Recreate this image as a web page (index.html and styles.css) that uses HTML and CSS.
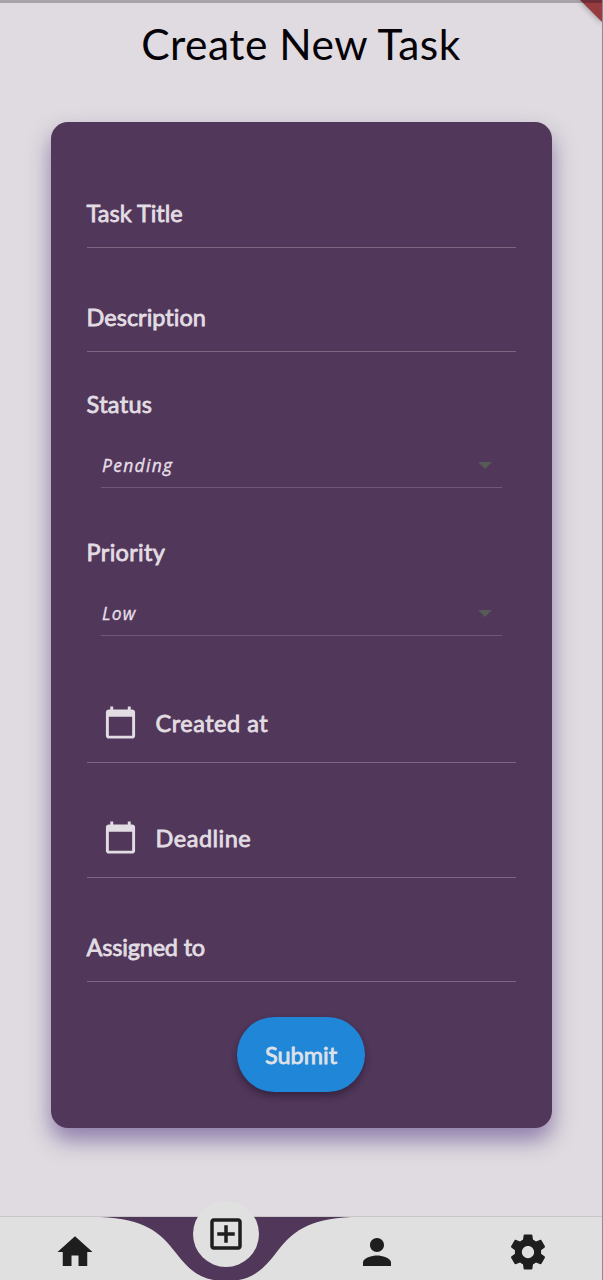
FILE: index.html
```html
<!DOCTYPE html>
<html lang="en">
<head>
<meta charset="utf-8">
<title>Create New Task</title>
<link rel="stylesheet" href="styles.css">
</head>
<body>
<div class="screen">
  <div class="status-strip"></div>
  <div class="ribbon-shade"><div class="ribbon"></div></div>
  <h1 class="title">Create New Task</h1>
  <main class="card">
    <div class="field field-first"><span class="label">Task Title</span></div>
    <div class="field"><span class="label">Description</span></div>
    <div class="group">
      <span class="label heading">Status</span>
      <div class="select"><span class="value">Pending</span><svg class="arrow" viewBox="0 0 14 7"><path d="M0 0h14L7 7z"/></svg></div>
    </div>
    <div class="group group-low">
      <span class="label heading">Priority</span>
      <div class="select"><span class="value">Low</span><svg class="arrow" viewBox="0 0 14 7"><path d="M0 0h14L7 7z"/></svg></div>
    </div>
    <div class="date date-first">
      <svg class="calendar" viewBox="0 0 24 24"><path d="M20 3h-1V1h-2v2H7V1H5v2H4c-1.1 0-2 .9-2 2v16c0 1.1.9 2 2 2h16c1.1 0 2-.9 2-2V5c0-1.1-.9-2-2-2zm0 18H4V8h16v13z"/></svg>
      <span class="label spaced">Created at</span>
    </div>
    <div class="date">
      <svg class="calendar" viewBox="0 0 24 24"><path d="M20 3h-1V1h-2v2H7V1H5v2H4c-1.1 0-2 .9-2 2v16c0 1.1.9 2 2 2h16c1.1 0 2-.9 2-2V5c0-1.1-.9-2-2-2zm0 18H4V8h16v13z"/></svg>
      <span class="label spaced">Deadline</span>
    </div>
    <div class="field"><span class="label tight">Assigned to</span></div>
    <button class="submit">Submit</button>
  </main>
  <nav class="nav">
    <svg class="notch" viewBox="0 0 252 64"><path d="M0 0C45 2 60 15 76 36C90 54 101 64 126 64S162 54 176 36C192 15 207 2 252 0Z"/></svg>
    <a class="item"><svg class="icon" viewBox="0 0 24 24"><path d="M10 20v-6h4v6h5v-8h3L12 3 2 12h3v8z"/></svg></a>
    <a class="item"><span class="bubble"><svg class="icon" viewBox="0 0 24 24"><path d="M19 3H5c-1.11 0-2 .9-2 2v14c0 1.1.89 2 2 2h14c1.1 0 2-.9 2-2V5c0-1.1-.9-2-2-2zm0 16H5V5h14v14zm-8-2h2v-4h4v-2h-4V7h-2v4H7v2h4z"/></svg></span></a>
    <a class="item"><svg class="icon" viewBox="0 0 24 24"><path d="M12 12c2.21 0 4-1.79 4-4s-1.79-4-4-4-4 1.79-4 4 1.79 4 4 4zm0 2c-2.67 0-8 1.34-8 4v2h16v-2c0-2.66-5.33-4-8-4z"/></svg></a>
    <a class="item"><svg class="icon" viewBox="0 0 24 24"><path d="M19.43 12.98c.04-.32.07-.64.07-.98s-.03-.66-.07-.98l2.11-1.65c.19-.15.24-.42.12-.64l-2-3.46c-.12-.22-.39-.3-.61-.22l-2.49 1c-.52-.4-1.08-.73-1.69-.98l-.38-2.65C14.46 2.18 14.25 2 14 2h-4c-.25 0-.46.18-.49.42l-.38 2.65c-.61.25-1.17.59-1.69.98l-2.49-1c-.23-.09-.49 0-.61.22l-2 3.46c-.13.22-.07.49.12.64l2.11 1.65c-.04.32-.07.65-.07.98s.03.66.07.98l-2.11 1.65c-.19.15-.24.42-.12.64l2 3.46c.12.22.39.3.61.22l2.49-1c.52.4 1.08.73 1.69.98l.38 2.65c.03.24.24.42.49.42h4c.25 0 .46-.18.49-.42l.38-2.65c.61-.25 1.17-.59 1.69-.98l2.49 1c.23.09.49 0 .61-.22l2-3.46c.12-.22.07-.49-.12-.64l-2.11-1.65zM12 15.5c-1.93 0-3.5-1.57-3.5-3.5s1.57-3.5 3.5-3.5 3.5 1.57 3.5 3.5-1.57 3.5-3.5 3.5z"/></svg></a>
  </nav>
  <div class="edge"></div>
</div>
</body>
</html>
```
FILE: styles.css
```css
* { box-sizing: border-box; }
body { margin: 0; font-family: Lato, sans-serif; background: #dfdbe0; }
.screen { position: relative; width: 603px; height: 1280px; overflow: hidden; display: flex; flex-direction: column; align-items: center; background: #dfdbe0; }
.status-strip { width: 100%; height: 3px; background: #a7a3a8; flex: none; }
.ribbon-shade { position: absolute; top: 0; right: 0; filter: drop-shadow(0 0 3px rgba(0, 0, 0, .4)); }
.ribbon { width: 23px; height: 23px; background: linear-gradient(#702d38 3px, #963c41 3px); clip-path: polygon(0 0, 100% 0, 100% 100%); }
.edge { position: absolute; top: 0; right: 0; width: 1px; height: 100%; background: #8e8b90; }
.title { margin: 13px 1px 0 0; height: 56px; line-height: 56px; font-size: 42.5px; font-weight: 400; letter-spacing: .5px; color: #050308; white-space: nowrap; }
.card { margin-top: 50px; width: 501px; height: 1006px; flex: none; padding: 0 36px; display: flex; flex-direction: column; border-radius: 17px; background: #51375a; box-shadow: 0 12px 22px rgba(75, 47, 126, .55); }
.label { display: block; margin-left: -.4px; font-size: 23.5px; line-height: 28px; font-weight: 400; -webkit-text-stroke: .8px #e2dde3; font-variant-ligatures: none; color: #e2dde3; white-space: nowrap; }
.heading { letter-spacing: .3px; }
.tight { letter-spacing: -.2px; }
.field { height: 104px; display: flex; align-items: flex-end; padding-bottom: 20px; border-bottom: 1px solid #7a667e; }
.field-first { height: 126px; }
.group { height: 136px; padding-top: 38px; }
.group-low { height: 148px; padding-top: 50px; }
.select { height: 70px; margin: 0 14px; padding: 32px 10px 0 1px; display: flex; justify-content: space-between; border-bottom: 1px solid #71577a; }
.value { font-family: "Open Sans", sans-serif; font-style: italic; font-size: 17.5px; line-height: 30px; letter-spacing: 1.3px; -webkit-text-stroke: .35px #e6dfe8; color: #e6dfe8; }
.arrow { width: 14px; height: 7px; margin-top: 12px; fill: #565b58; }
.date { height: 115px; display: flex; align-items: flex-end; gap: 18px; padding: 0 0 22px 16px; border-bottom: 1px solid #7a667e; }
.date-first { height: 127px; }
.calendar { width: 35px; height: 35px; fill: #e2dde3; }
.date .label { padding-bottom: 4px; height: 31px; }
.spaced { letter-spacing: .5px; }
.submit { align-self: center; width: 128px; height: 75px; margin: 35px 1px 0 0; padding: 0; border: 0; border-radius: 38px; background: #2086d8; color: #dfe1e8; font: 400 23.5px Lato, sans-serif; -webkit-text-stroke: .8px #dfe1e8; box-shadow: 0 4px 7px rgba(20, 10, 30, .45); }
.nav { position: relative; width: 100%; height: 63.5px; margin-top: auto; flex: none; display: flex; background: #e0e0e0; box-shadow: 0 -1px 0 #c9c6ca; }
.notch { position: absolute; left: 100px; top: 0; width: 252px; height: 64px; fill: #51375a; }
.item { position: relative; flex: 1; display: flex; justify-content: center; align-items: flex-start; padding-top: 14.5px; }
.icon { width: 42px; height: 42px; fill: #1e1e1e; }
.bubble { width: 66px; height: 66px; flex: none; margin-top: -30.5px; display: flex; align-items: center; justify-content: center; border-radius: 50%; background: #e0e0e0; }
```
